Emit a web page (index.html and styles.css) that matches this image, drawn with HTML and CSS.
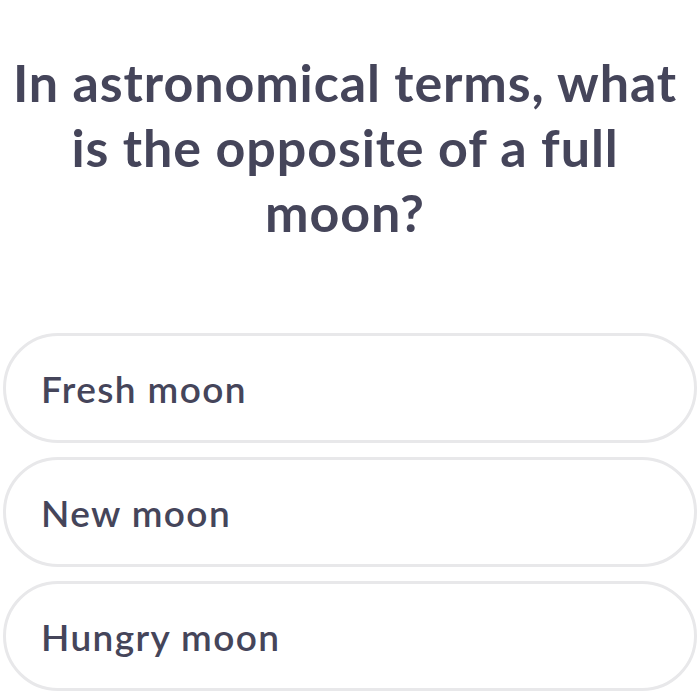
FILE: index.html
```html
<!DOCTYPE html>
<html lang="en">
<head>
<meta charset="utf-8">
<title>Quiz</title>
<link rel="stylesheet" href="styles.css">
</head>
<body>
<main class="quiz">
  <h1 class="question">In astronomical terms, what is the opposite of a full moon?</h1>
  <div class="options">
    <button class="option">Fresh moon</button>
    <button class="option">New moon</button>
    <button class="option">Hungry moon</button>
  </div>
</main>
</body>
</html>
```
FILE: styles.css
```css
html, body {
  margin: 0;
  padding: 0;
  background: #ffffff;
}
body {
  font-family: Lato, "Noto Sans", sans-serif;
  color: #45455a;
}
.quiz {
  display: flex;
  flex-direction: column;
  padding: 50px 3px 0 3px;
}
.question {
  margin: 0 10px 0 0;
  padding: 0 4px;
  font-size: 52px;
  font-weight: 700;
  line-height: 65px;
  letter-spacing: 0.9px;
  text-align: center;
}
.options {
  display: flex;
  flex-direction: column;
  gap: 14px;
  margin-top: 88px;
}
.option {
  display: flex;
  align-items: center;
  height: 110px;
  box-sizing: border-box;
  border: 3px solid #e8e8ea;
  border-radius: 55px;
  background: #ffffff;
  padding: 0 36px 0 35px;
  font-family: Lato, "Noto Sans", sans-serif;
  font-size: 37px;
  font-weight: 600;
  letter-spacing: 1.4px;
  color: #45455a;
  text-align: left;
}
```
